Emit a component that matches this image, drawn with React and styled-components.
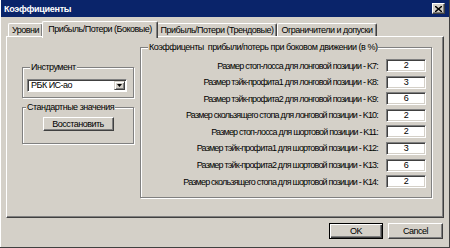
import React from 'react'
import styled, { createGlobalStyle } from 'styled-components'

const GlobalStyle = createGlobalStyle`
    html, body {
        margin: 0;
        padding: 0;
        background: #d4d0c8;
    }
    * {
        box-sizing: border-box;
    }
`

const Window = styled.div`
    width: 450px;
    height: 248px;
    display: flex;
    flex-direction: column;
    background: #d4d0c8;
    padding: 0 1px 1px 1px;
    box-shadow: inset -1px -1px 0 #404040, inset 1px 0 0 #ffffff;
    font-family: "Liberation Sans", Arial, sans-serif;
    font-size: 9px;
    letter-spacing: -0.5px;
    color: #000;
    overflow: hidden;
`

const TitleBar = styled.div`
    height: 17px;
    background: #0a246a;
    display: flex;
    align-items: center;
    justify-content: space-between;
    padding: 0 4px 0 3px;
`

const Title = styled.span`
    color: #fff;
    font-weight: bold;
    font-size: 9px;
    letter-spacing: -0.3px;
`

const CloseButton = styled.div`
    width: 13px;
    height: 11px;
    background: #d4d0c8;
    border: 1px solid;
    border-color: #ffffff #404040 #404040 #ffffff;
    box-shadow: inset -1px -1px 0 #808080;
    display: flex;
    align-items: center;
    justify-content: center;
`

const Content = styled.div`
    flex: 1;
    display: flex;
    flex-direction: column;
    padding: 4px 5px 0 5px;
`

const TabRow = styled.div`
    height: 15px;
    display: flex;
    align-items: flex-end;
    padding-left: 2px;
`

const Tab = styled.div`
    position: relative;
    width: ${p => p.$w}px;
    height: ${p => (p.$active ? 17 : 13)}px;
    margin: 0 ${p => (p.$active ? -1 : 0)}px ${p => (p.$active ? -2 : 0)}px;
    z-index: ${p => (p.$active ? 2 : 1)};
    background: #d4d0c8;
    border-top: 1px solid #fff;
    border-left: 1px solid #fff;
    border-right: 1px solid #404040;
    border-radius: 2px 2px 0 0;
    box-shadow: inset -1px 0 0 #808080;
    display: flex;
    align-items: ${p => (p.$active ? 'flex-start' : 'center')};
    padding-top: ${p => (p.$active ? 2 : 0)}px;
    justify-content: center;
    white-space: nowrap;
`

const Panel = styled.div`
    height: 182px;
    display: flex;
    gap: 6px;
    padding: 4px 10px 0 15px;
    border: 1px solid;
    border-color: #ffffff #404040 #404040 #ffffff;
    box-shadow: inset -1px -1px 0 #808080;
`

const LeftColumn = styled.div`
    width: 112px;
    margin-top: 20px;
    display: flex;
    flex-direction: column;
    gap: 3px;
`

const GroupBox = styled.fieldset`
    margin: 0;
    width: ${p => p.$w}px;
    height: ${p => p.$h}px;
    padding: ${p => p.$pad};
    border: 1px solid #808080;
    box-shadow: inset 1px 1px 0 #fff, 1px 1px 0 #fff;
    display: flex;
    flex-direction: column;
    align-items: ${p => p.$align || 'stretch'};
`

const Caption = styled.legend`
    margin-left: 3px;
    padding: 0 1px;
    line-height: 12px;
    white-space: pre;
    background: #d4d0c8;
`

const Combo = styled.div`
    width: 100px;
    height: 13px;
    background: #fff;
    border: 1px solid;
    border-color: #808080 #fff #fff #808080;
    box-shadow: inset 1px 1px 0 #404040;
    display: flex;
    align-items: stretch;
    padding: 1px;
`

const ComboText = styled.span`
    flex: 1;
    padding-left: 2px;
    line-height: 9px;
`

const ComboArrow = styled.div`
    width: 11px;
    background: #d4d0c8;
    border: 1px solid;
    border-color: #d4d0c8 #404040 #404040 #d4d0c8;
    box-shadow: inset 1px 1px 0 #fff, inset -1px -1px 0 #808080;
    display: flex;
    align-items: center;
    justify-content: center;
`

const Button = styled.button`
    width: ${p => p.$w}px;
    height: ${p => p.$h}px;
    margin: 0;
    padding: 0;
    font: inherit;
    letter-spacing: inherit;
    color: #000;
    background: #d4d0c8;
    border: 1px solid;
    border-color: ${p => (p.$default ? '#000' : '#fff #404040 #404040 #fff')};
    box-shadow: ${p => (p.$default
        ? 'inset 1px 1px 0 #fff, inset -1px -1px 0 #404040, inset -2px -2px 0 #808080'
        : 'inset -1px -1px 0 #808080')};
`

const CoefGrid = styled.div`
    display: grid;
    grid-template-columns: 1fr 40px;
    grid-auto-rows: 13px;
    row-gap: 3.6px;
    column-gap: 8px;
    align-items: center;
`

const Label = styled.span`
    text-align: right;
    white-space: nowrap;
    letter-spacing: -0.8px;
`

const Edit = styled.div`
    height: 13px;
    background: #fff;
    border: 1px solid;
    border-color: #808080 #fff #fff #808080;
    box-shadow: inset 1px 1px 0 #404040, inset -1px -1px 0 #d4d0c8;
    display: flex;
    align-items: center;
    justify-content: center;
    line-height: 9px;
`

const Footer = styled.div`
    display: flex;
    justify-content: flex-end;
    gap: 5px;
    margin-top: 5px;
    padding-right: 1px;
`

const coefs = [
    ['Размер стоп-лосса для лонговой позиции - K7:', '2'],
    ['Размер тэйк-профита1 для лонговой позиции - K8:', '3'],
    ['Размер тэйк-профита2 для лонговой позиции - K9:', '6'],
    ['Размер скользящего стопа для лонговой позиции - K10:', '2'],
    ['Размер стоп-лосса для шортовой позиции - K11:', '2'],
    ['Размер тэйк-профита1 для шортовой позиции - K12:', '3'],
    ['Размер тэйк-профита2 для шортовой позиции - K13:', '6'],
    ['Размер скользящего стопа для шортовой позиции - K14:', '2'],
]

const tabs = [
    { title: 'Уровни', w: 35 },
    { title: 'Прибыль/Потери (Боковые)', w: 116, active: true },
    { title: 'Прибыль/Потери (Трендовые)', w: 120 },
    { title: 'Ограничители и допуски', w: 100 },
]

function App() {
    return (
        <>
            <GlobalStyle />
            <Window>
                <TitleBar>
                    <Title>Коэффициенты</Title>
                    <CloseButton>
                        <svg width='7' height='6' viewBox='0 0 7 6'>
                            <path d='M0 0 L7 6 M7 0 L0 6' stroke='#000' strokeWidth='1.4' />
                        </svg>
                    </CloseButton>
                </TitleBar>
                <Content>
                    <TabRow>
                        {tabs.map(t => (
                            <Tab key={t.title} $w={t.w} $active={t.active}>{t.title}</Tab>
                        ))}
                    </TabRow>
                    <Panel>
                        <LeftColumn>
                            <GroupBox $w={112} $h={37} $pad='6px 4px 0 4px'>
                                <Caption>Инструмент</Caption>
                                <Combo>
                                    <ComboText>РБК ИС-ао</ComboText>
                                    <ComboArrow>
                                        <svg width='5' height='3' viewBox='0 0 5 3'>
                                            <path d='M0 0 H5 L2.5 3 Z' fill='#000' />
                                        </svg>
                                    </ComboArrow>
                                </Combo>
                            </GroupBox>
                            <GroupBox $w={112} $h={43} $pad='4px 0 0 0' $align='center'>
                                <Caption>Стандартные значения</Caption>
                                <Button $w={71} $h={14}>Восстановить</Button>
                            </GroupBox>
                        </LeftColumn>
                        <GroupBox $w={292} $h={157} $pad='6px 5px 0 4px'>
                            <Caption>{'Коэффиценты  прибыли/потерь при боковом движении (в %)'}</Caption>
                            <CoefGrid>
                                {coefs.map(([label, value]) => (
                                    <React.Fragment key={label}>
                                        <Label>{label}</Label>
                                        <Edit>{value}</Edit>
                                    </React.Fragment>
                                ))}
                            </CoefGrid>
                        </GroupBox>
                    </Panel>
                    <Footer>
                        <Button $w={54} $h={16} $default>OK</Button>
                        <Button $w={55} $h={16}>Cancel</Button>
                    </Footer>
                </Content>
            </Window>
        </>
    )
}

export default App
